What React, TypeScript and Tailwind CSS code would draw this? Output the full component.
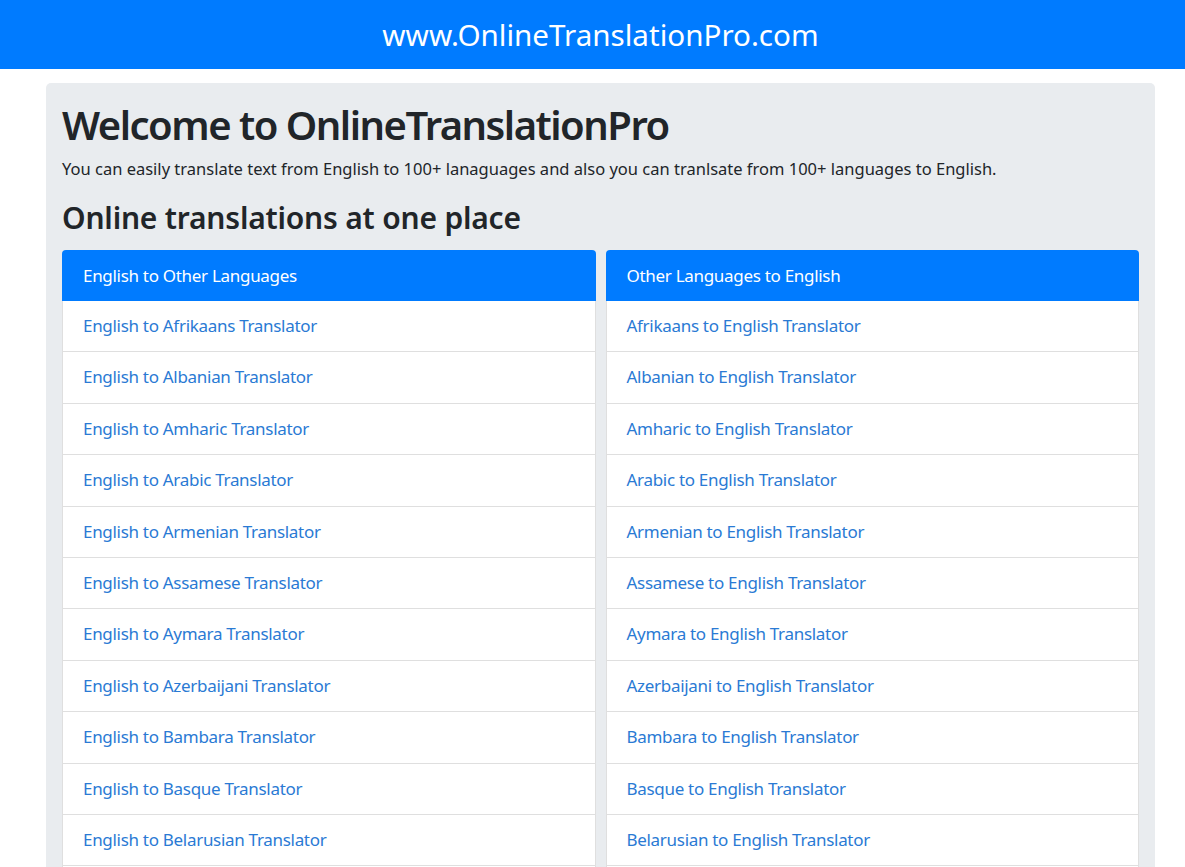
import React from "react";

const langs = [
  "Afrikaans",
  "Albanian",
  "Amharic",
  "Arabic",
  "Armenian",
  "Assamese",
  "Aymara",
  "Azerbaijani",
  "Bambara",
  "Basque",
  "Belarusian",
  "Bengali",
];

function Card({ title, items }: { title: string; items: string[] }) {
  return (
    <div className="flex-1 min-w-0 flex flex-col">
      <div className="h-[51px] bg-[#007bff] rounded-t-[4px] text-white text-[17px] tracking-[-0.3px] leading-[51px] pl-[21px]">
        {title}
      </div>
      {items.map((t) => (
        <div
          key={t}
          className="h-[51.4px] bg-white border-x border-b border-[#dfdfdf] text-[17px] tracking-[-0.3px] leading-[50px] pl-[20px] text-[#2a7ad4]"
        >
          {t}
        </div>
      ))}
    </div>
  );
}

export default function App() {
  return (
    <div
      className="w-[1185px] h-[867px] overflow-hidden bg-white"
      style={{ fontFamily: '"Noto Sans", "Open Sans", sans-serif' }}
    >
      <div className="h-[69px] bg-[#007bff] text-white text-[29.6px] leading-[69px] text-center pl-[16px]">
        www.OnlineTranslationPro.com
      </div>
      <div className="ml-[46px] mt-[14px] w-[1109px] bg-[#e9ecef] rounded-[5px] px-[16px] pt-[16px] h-[900px]">
        <h1 className="text-[40px] leading-[52px] font-semibold tracking-[-1.5px] text-[#212529]">
          Welcome to OnlineTranslationPro
        </h1>
        <p className="text-[16.5px] leading-[28px] text-[#212529] mt-[4px]">
          You can easily translate text from English to 100+ lanaguages and also you can tranlsate from 100+ languages to English.
        </p>
        <h2 className="text-[30px] leading-[44px] font-semibold tracking-[-0.2px] text-[#212529] mt-[13px] mb-[10px]">
          Online translations at one place
        </h2>
        <div className="flex gap-[10px]">
          <Card
            title="English to Other Languages"
            items={langs.map((l) => `English to ${l} Translator`)}
          />
          <Card
            title="Other Languages to English"
            items={langs.map((l) => `${l} to English Translator`)}
          />
        </div>
      </div>
    </div>
  );
}
